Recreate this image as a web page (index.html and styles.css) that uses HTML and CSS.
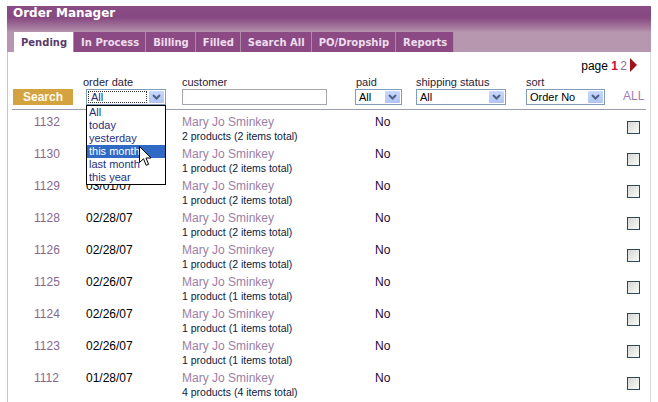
FILE: index.html
```html
<!DOCTYPE html>
<html lang="en">
<head>
    <meta charset="UTF-8">
    <title>Order Manager</title>
    <link rel="stylesheet" href="styles.css">
</head>
<body>
    <div class="panel">
        <div class="header">Order Manager</div>
        <div class="tabbar">
            <a class="tab active">Pending</a>
            <a class="tab">In Process</a>
            <a class="tab">Billing</a>
            <a class="tab">Filled</a>
            <a class="tab">Search All</a>
            <a class="tab">PO/Dropship</a>
            <a class="tab">Reports</a>
        </div>
        <div class="content">
            <div class="pager">page <b class="cur">1</b> <span class="pg">2</span><span class="next"></span></div>

            <div class="filters">
                <div class="f"><button class="search-btn">Search</button></div>
                <div class="f">
                    <label class="date-label">order date</label>
                    <div class="combo">
                        <div class="select w-date">
                            <span class="val focus">All</span>
                            <span class="drop"><svg width="9" height="6" viewBox="0 0 9 6"><polyline points="1,1 4.5,4.5 8,1" fill="none" stroke="#4d6185" stroke-width="2"/></svg></span>
                        </div>
                        <div class="dropdown">
                            <div class="opt">All</div>
                            <div class="opt">today</div>
                            <div class="opt">yesterday</div>
                            <div class="opt hl">this month</div>
                            <div class="opt">last month</div>
                            <div class="opt">this year</div>
                            <svg class="cursor" width="13" height="21" viewBox="0 0 13 21"><path d="M0.5,0.5 L0.5,16.5 L4.5,12.8 L7.2,19.3 L9.6,18.3 L7,12 L12,12 Z" fill="#fff" stroke="#000" stroke-width="1"/></svg>
                        </div>
                    </div>
                </div>
                <div class="f">
                    <label>customer</label>
                    <div class="textbox"></div>
                </div>
                <div class="f">
                    <label>paid</label>
                    <div class="select w-paid">
                        <span class="val">All</span>
                        <span class="drop"><svg width="9" height="6" viewBox="0 0 9 6"><polyline points="1,1 4.5,4.5 8,1" fill="none" stroke="#4d6185" stroke-width="2"/></svg></span>
                    </div>
                </div>
                <div class="f">
                    <label>shipping status</label>
                    <div class="select w-ship">
                        <span class="val">All</span>
                        <span class="drop"><svg width="9" height="6" viewBox="0 0 9 6"><polyline points="1,1 4.5,4.5 8,1" fill="none" stroke="#4d6185" stroke-width="2"/></svg></span>
                    </div>
                </div>
                <div class="f">
                    <label>sort</label>
                    <div class="select w-sort">
                        <span class="val">Order No</span>
                        <span class="drop"><svg width="9" height="6" viewBox="0 0 9 6"><polyline points="1,1 4.5,4.5 8,1" fill="none" stroke="#4d6185" stroke-width="2"/></svg></span>
                    </div>
                </div>
                <div class="f"><a class="all">ALL</a></div>
            </div>

            <div class="orders">
                <div class="order">
                    <span class="num">1132</span><span class="date">03/02/07</span>
                    <div class="cust"><a class="name">Mary Jo Sminkey</a><div class="items">2 products (2 items total)</div></div>
                    <span class="paid">No</span><input type="checkbox" class="pick">
                </div>
                <div class="order">
                    <span class="num">1130</span><span class="date">03/01/07</span>
                    <div class="cust"><a class="name">Mary Jo Sminkey</a><div class="items">1 product (2 items total)</div></div>
                    <span class="paid">No</span><input type="checkbox" class="pick">
                </div>
                <div class="order">
                    <span class="num">1129</span><span class="date">03/01/07</span>
                    <div class="cust"><a class="name">Mary Jo Sminkey</a><div class="items">1 product (2 items total)</div></div>
                    <span class="paid">No</span><input type="checkbox" class="pick">
                </div>
                <div class="order">
                    <span class="num">1128</span><span class="date">02/28/07</span>
                    <div class="cust"><a class="name">Mary Jo Sminkey</a><div class="items">1 product (2 items total)</div></div>
                    <span class="paid">No</span><input type="checkbox" class="pick">
                </div>
                <div class="order">
                    <span class="num">1126</span><span class="date">02/28/07</span>
                    <div class="cust"><a class="name">Mary Jo Sminkey</a><div class="items">1 product (2 items total)</div></div>
                    <span class="paid">No</span><input type="checkbox" class="pick">
                </div>
                <div class="order">
                    <span class="num">1125</span><span class="date">02/26/07</span>
                    <div class="cust"><a class="name">Mary Jo Sminkey</a><div class="items">1 product (1 items total)</div></div>
                    <span class="paid">No</span><input type="checkbox" class="pick">
                </div>
                <div class="order">
                    <span class="num">1124</span><span class="date">02/26/07</span>
                    <div class="cust"><a class="name">Mary Jo Sminkey</a><div class="items">1 product (1 items total)</div></div>
                    <span class="paid">No</span><input type="checkbox" class="pick">
                </div>
                <div class="order">
                    <span class="num">1123</span><span class="date">02/26/07</span>
                    <div class="cust"><a class="name">Mary Jo Sminkey</a><div class="items">1 product (1 items total)</div></div>
                    <span class="paid">No</span><input type="checkbox" class="pick">
                </div>
                <div class="order">
                    <span class="num">1112</span><span class="date">01/28/07</span>
                    <div class="cust"><a class="name">Mary Jo Sminkey</a><div class="items">4 products (4 items total)</div></div>
                    <span class="paid">No</span><input type="checkbox" class="pick">
                </div>
            </div>
        </div>
    </div>
</body>
</html>
```

FILE: styles.css
```css
body {
    margin: 0;
    font-family: "Liberation Sans", Arial, sans-serif;
    background-color: #fff;
    overflow: hidden;
}

.panel {
    margin: 6px 0 0 7px;
    width: 644px;
}

.header {
    height: 26px;
    line-height: 24px;
    padding-left: 6px;
    color: #fff;
    font: bold 12px "DejaVu Sans", Verdana, sans-serif;
    background: linear-gradient(#8a4c84 0%, #874881 45%, #a67b9f 85%, #b493ac 100%);
}

.tabbar {
    display: flex;
    height: 20px;
    padding-left: 7px;
    background-color: #b697af;
}

.tab {
    padding: 1px 6px 0 7px;
    font: bold 10px "DejaVu Sans", Verdana, sans-serif;
    line-height: 19px;
    color: #efdeee;
    background-color: #8b4a84;
    border-right: 1px solid #b08aab;
}

.tab.active {
    background-color: #fff;
    color: #5b3b6b;
}

.content {
    border-left: 1px solid #c6c6c6;
    border-right: 1px solid #dadada;
    padding: 0 4px;
    height: 360px;
}

.pager {
    text-align: right;
    padding: 6px 9px 0 0;
    height: 17px;
    line-height: 15px;
    font-size: 12px;
    color: #000;
}

.pager .cur {
    color: #c8102e;
}

.pager .pg {
    color: #8d6f99;
    margin-left: -1px;
}

.pager .next {
    display: inline-block;
    width: 0;
    height: 0;
    margin-left: 3px;
    vertical-align: -2px;
    border-top: 7px solid transparent;
    border-bottom: 7px solid transparent;
    border-left: 7px solid #a0121b;
}

.filters {
    display: grid;
    grid-template-columns: 74px 96px 174px 60px 110px 97px 1fr;
    align-items: end;
    height: 30px;
    padding-bottom: 4px;
    border-bottom: 1px solid #9b9eaa;
}

.f {
    display: flex;
    flex-direction: column;
    align-items: flex-start;
}

.f label {
    font-size: 11px;
    line-height: 12px;
    color: #2a2236;
    margin-bottom: 1px;
}

.f .date-label {
    margin-left: -3px;
}

.search-btn {
    width: 60px;
    height: 16px;
    margin-left: 1px;
    padding: 0;
    border: none;
    background-color: #d3a33f;
    color: #fffaf0;
    font: bold 12px "Liberation Sans", Arial, sans-serif;
}

.combo {
    position: relative;
}

.select {
    display: flex;
    height: 16px;
    box-sizing: border-box;
    border: 1px solid #7f9db9;
    background-color: #fff;
}

.w-date { width: 80px; }
.w-paid { width: 47px; margin-left: -1px; }
.w-ship { width: 90px; }
.w-sort { width: 79px; }

.select .val {
    flex: 1;
    padding-left: 3px;
    font-size: 11px;
    line-height: 14px;
    color: #000;
}

.select .val.focus {
    margin: 1px;
    padding-left: 2px;
    line-height: 10px;
    border: 1px dotted #333;
    color: #1c2b7c;
}

.select .drop {
    width: 15px;
    margin: 1px;
    display: flex;
    align-items: center;
    justify-content: center;
    background: linear-gradient(#c9d8fc, #b1c4f3);
    border-radius: 1px;
}

.textbox {
    width: 145px;
    height: 16px;
    box-sizing: border-box;
    border: 1px solid #a3a7ad;
    background-color: #fff;
}

.all {
    margin: 0 0 2px 0;
    font-size: 12px;
    color: #9d7db7;
}

.dropdown {
    position: absolute;
    left: 0;
    top: 100%;
    width: 80px;
    box-sizing: border-box;
    border: 1px solid #000;
    background-color: #fff;
    z-index: 2;
}

.opt {
    height: 13px;
    line-height: 13px;
    padding-left: 2px;
    font-size: 11px;
    color: #1f2f80;
}

.opt.hl {
    background-color: #316ac5;
    color: #fff;
}

.cursor {
    position: absolute;
    left: 52px;
    top: 40px;
}

.order {
    display: grid;
    grid-template-columns: 74px 96px 193px 252px 13px;
    height: 32px;
    box-sizing: border-box;
    padding-top: 5px;
    font-size: 12px;
    line-height: 15px;
}

.num {
    padding-left: 22px;
    color: #86688e;
}

.date {
    color: #000;
}

.name {
    color: #9b7ea8;
}

.items {
    font-size: 10.5px;
    line-height: 12px;
    color: #0d1a3a;
}

.paid {
    color: #1e0a3a;
}

.pick {
    appearance: none;
    width: 13px;
    height: 13px;
    margin: 6px 0 0 0;
    box-sizing: border-box;
    border: 1px solid #33475c;
    background: linear-gradient(135deg, #d6d6d2, #fbfbfb);
}
```
